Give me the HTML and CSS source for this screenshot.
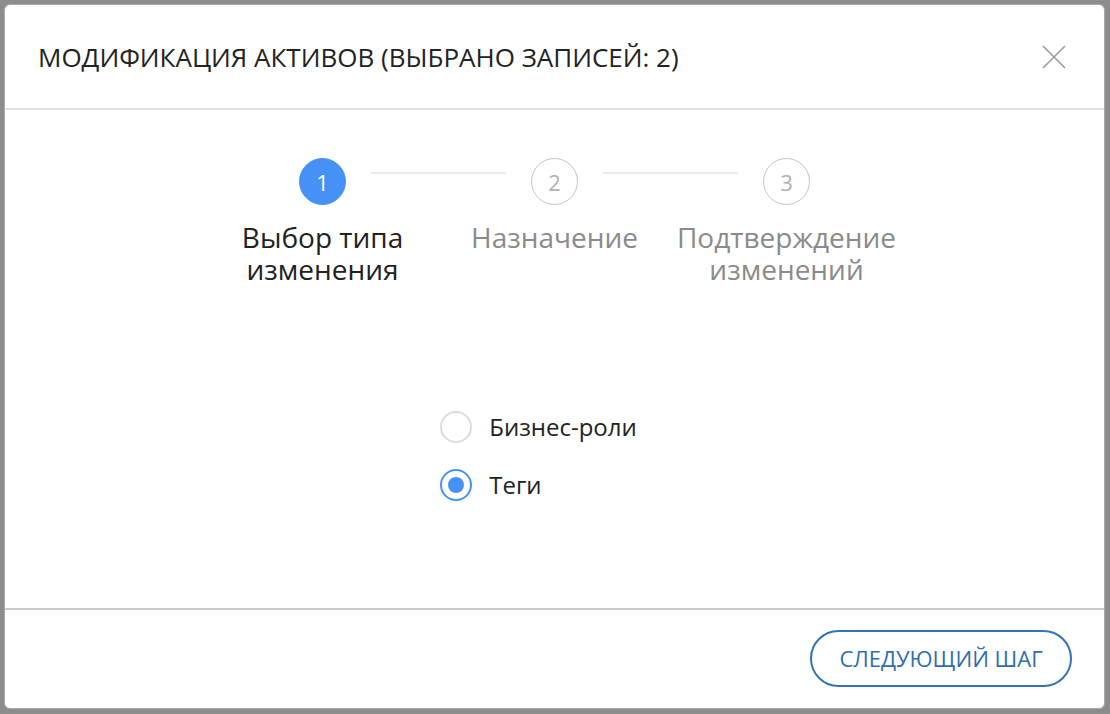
FILE: index.html
```html
<!DOCTYPE html>
<html lang="ru">
<head>
<meta charset="utf-8">
<title>Модификация активов</title>
<link rel="stylesheet" href="styles.css">
</head>
<body>
<div class="modal">
  <div class="modal-header">
    <h1 class="modal-title">МОДИФИКАЦИЯ АКТИВОВ (ВЫБРАНО ЗАПИСЕЙ: 2)</h1>
    <button class="close-btn" aria-label="Закрыть">
      <svg width="24" height="24" viewBox="0 0 24 24"><path d="M1 1 L23 23 M23 1 L1 23" stroke="#9a9a9a" stroke-width="1.6" fill="none"/></svg>
    </button>
  </div>
  <div class="modal-body">
    <div class="stepper">
      <div class="step active">
        <div class="step-circle">1</div>
        <div class="step-label">Выбор типа<br>изменения</div>
      </div>
      <div class="step-line"></div>
      <div class="step">
        <div class="step-circle">2</div>
        <div class="step-label">Назначение</div>
      </div>
      <div class="step-line"></div>
      <div class="step">
        <div class="step-circle">3</div>
        <div class="step-label">Подтверждение<br>изменений</div>
      </div>
    </div>
    <div class="radio-group">
      <label class="radio"><span class="radio-mark"></span><span class="radio-text">Бизнес-роли</span></label>
      <label class="radio checked"><span class="radio-mark"></span><span class="radio-text">Теги</span></label>
    </div>
  </div>
  <div class="modal-footer">
    <button class="next-btn">СЛЕДУЮЩИЙ ШАГ</button>
  </div>
</div>
</body>
</html>
```
FILE: styles.css
```css
* { box-sizing: border-box; }
html, body { margin: 0; padding: 0; }
body {
  background: #8c8c8c;
  width: 1110px;
  height: 714px;
  padding: 4px 5px 5px 4px;
  font-family: "Open Sans", "Noto Sans", sans-serif;
  color: #222;
}
.modal {
  width: 1101px;
  height: 705px;
  background: #fff;
  border: 1px solid #a9a9a9;
  border-radius: 6px;
  display: flex;
  flex-direction: column;
  overflow: hidden;
}
.modal-header {
  height: 105px;
  flex: none;
  display: flex;
  align-items: center;
  justify-content: space-between;
  padding: 0 38px 0 33px;
  border-bottom: 2px solid #e2e2e2;
}
.modal-title {
  margin: 0;
  font-size: 26px;
  font-weight: 400;
  color: #222;
  line-height: 32px;
}
.close-btn {
  border: 0;
  background: none;
  padding: 0;
  width: 24px;
  height: 24px;
  display: flex;
}
.modal-body {
  flex: 1;
  display: flex;
  flex-direction: column;
  align-items: center;
  padding-top: 48px;
}
.stepper {
  display: flex;
  align-items: flex-start;
}
.step {
  width: 47px;
  display: flex;
  flex-direction: column;
  align-items: center;
}
.step-circle {
  width: 47px;
  height: 47px;
  border-radius: 50%;
  border: 1.5px solid #c4c4c4;
  color: #b0b0b0;
  font-size: 22px;
  display: flex;
  align-items: center;
  justify-content: center;
}
.step.active .step-circle {
  background: #4691f6;
  border-color: #4691f6;
  color: #fff;
}
.step-label {
  margin-top: 16px;
  white-space: nowrap;
  text-align: center;
  font-size: 28px;
  line-height: 32px;
  color: #8a8a8a;
}
.step.active .step-label { color: #222; }
.step-line {
  width: 135px;
  height: 2px;
  background: #ebebeb;
  margin: 14px 25px 0;
}
.radio-group {
  margin-top: 126px;
  display: flex;
  flex-direction: column;
  gap: 26px;
  margin-right: 32px;
}
.radio {
  display: flex;
  align-items: center;
  gap: 17px;
  font-size: 24px;
  line-height: 32px;
  color: #222;
}
.radio-mark {
  width: 32px;
  height: 32px;
  border-radius: 50%;
  border: 2px solid #dcdcdc;
  display: flex;
  align-items: center;
  justify-content: center;
}
.radio.checked .radio-mark { border-color: #4691f6; }
.radio.checked .radio-mark::after {
  content: "";
  width: 16px;
  height: 16px;
  border-radius: 50%;
  background: #4691f6;
}
.modal-footer {
  flex: none;
  height: 100px;
  border-top: 2px solid #c9c9c9;
  display: flex;
  align-items: center;
  justify-content: flex-end;
  padding: 0 32px 2px 0;
}
.next-btn {
  width: 262px;
  height: 57px;
  border: 2px solid #3274b3;
  border-radius: 29px;
  background: #fff;
  color: #2f6eab;
  font-family: "Open Sans", "Noto Sans", sans-serif;
  font-size: 22px;
  padding: 0;
}
```
